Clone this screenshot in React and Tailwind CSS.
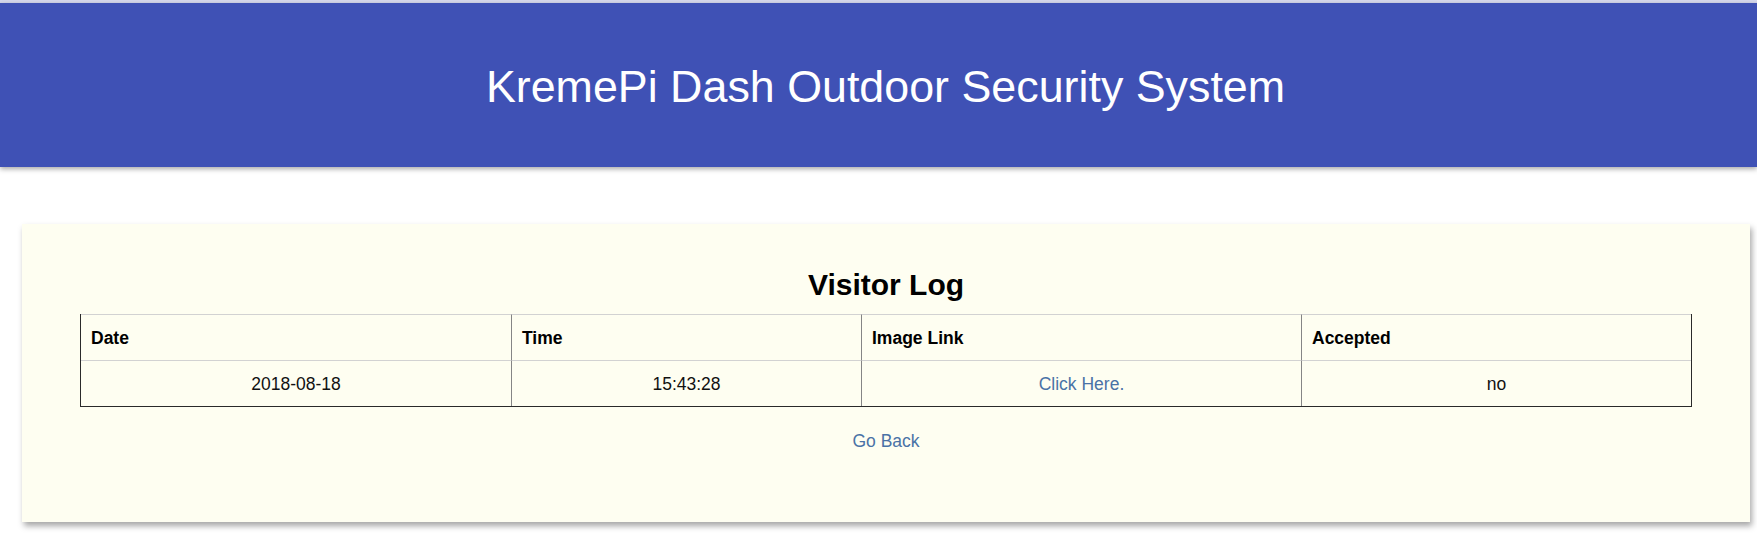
export default function App() {
  const font = { fontFamily: '"Liberation Sans", Arial, sans-serif' };
  return (
    <div className="min-h-[546px] bg-white" style={font}>
      <div className="h-[3px] bg-[#d6d8ec]" />
      <header className="relative z-10 flex h-[164px] items-center justify-center bg-[#3f51b5] pl-[14px] pt-[2px] shadow-[0_2px_5px_rgba(0,0,0,0.35)]">
        <h1 className="text-[44.8px] font-normal leading-[52px] text-white">
          KremePi Dash Outdoor Security System
        </h1>
      </header>

      <main className="ml-[22px] mt-[57px] w-[1728px] bg-[#fefef1] px-[58px] pb-[71px] pt-[44px] shadow-[2px_4px_6px_rgba(0,0,0,0.35)]">
        <h2 className="mb-[12px] text-center text-[30px] font-bold leading-[34px] text-black">
          Visitor Log
        </h2>
        <table className="w-[1612px] table-fixed border-separate border-spacing-0 border-b border-l border-r border-[#2a2a2a] text-[17.5px] leading-[20px] text-[#111]">
          <colgroup>
            <col className="w-[430px]" />
            <col className="w-[350px]" />
            <col className="w-[440px]" />
            <col className="w-[390px]" />
          </colgroup>
          <thead>
            <tr>
              <th className="h-[46px] border-t border-[#d2d2d2] pl-[10px] text-left font-bold text-black">
                Date
              </th>
              <th className="h-[46px] border-l border-t border-l-[#858585] border-t-[#d2d2d2] pl-[10px] text-left font-bold text-black">
                Time
              </th>
              <th className="h-[46px] border-l border-t border-l-[#858585] border-t-[#d2d2d2] pl-[10px] text-left font-bold text-black">
                Image Link
              </th>
              <th className="h-[46px] border-l border-t border-l-[#858585] border-t-[#d2d2d2] pl-[10px] text-left font-bold text-black">
                Accepted
              </th>
            </tr>
          </thead>
          <tbody>
            <tr>
              <td className="h-[46px] border-t border-[#d2d2d2] text-center">2018-08-18</td>
              <td className="h-[46px] border-l border-t border-l-[#858585] border-t-[#d2d2d2] text-center">
                15:43:28
              </td>
              <td className="h-[46px] border-l border-t border-l-[#858585] border-t-[#d2d2d2] text-center">
                <a href="#" className="text-[#4a72a6]">Click Here.</a>
              </td>
              <td className="h-[46px] border-l border-t border-l-[#858585] border-t-[#d2d2d2] text-center">
                no
              </td>
            </tr>
          </tbody>
        </table>
        <div className="mt-[24px] text-center text-[17.5px] leading-[20px]">
          <a href="#" className="text-[#4a72a6]">Go Back</a>
        </div>
      </main>
    </div>
  );
}
